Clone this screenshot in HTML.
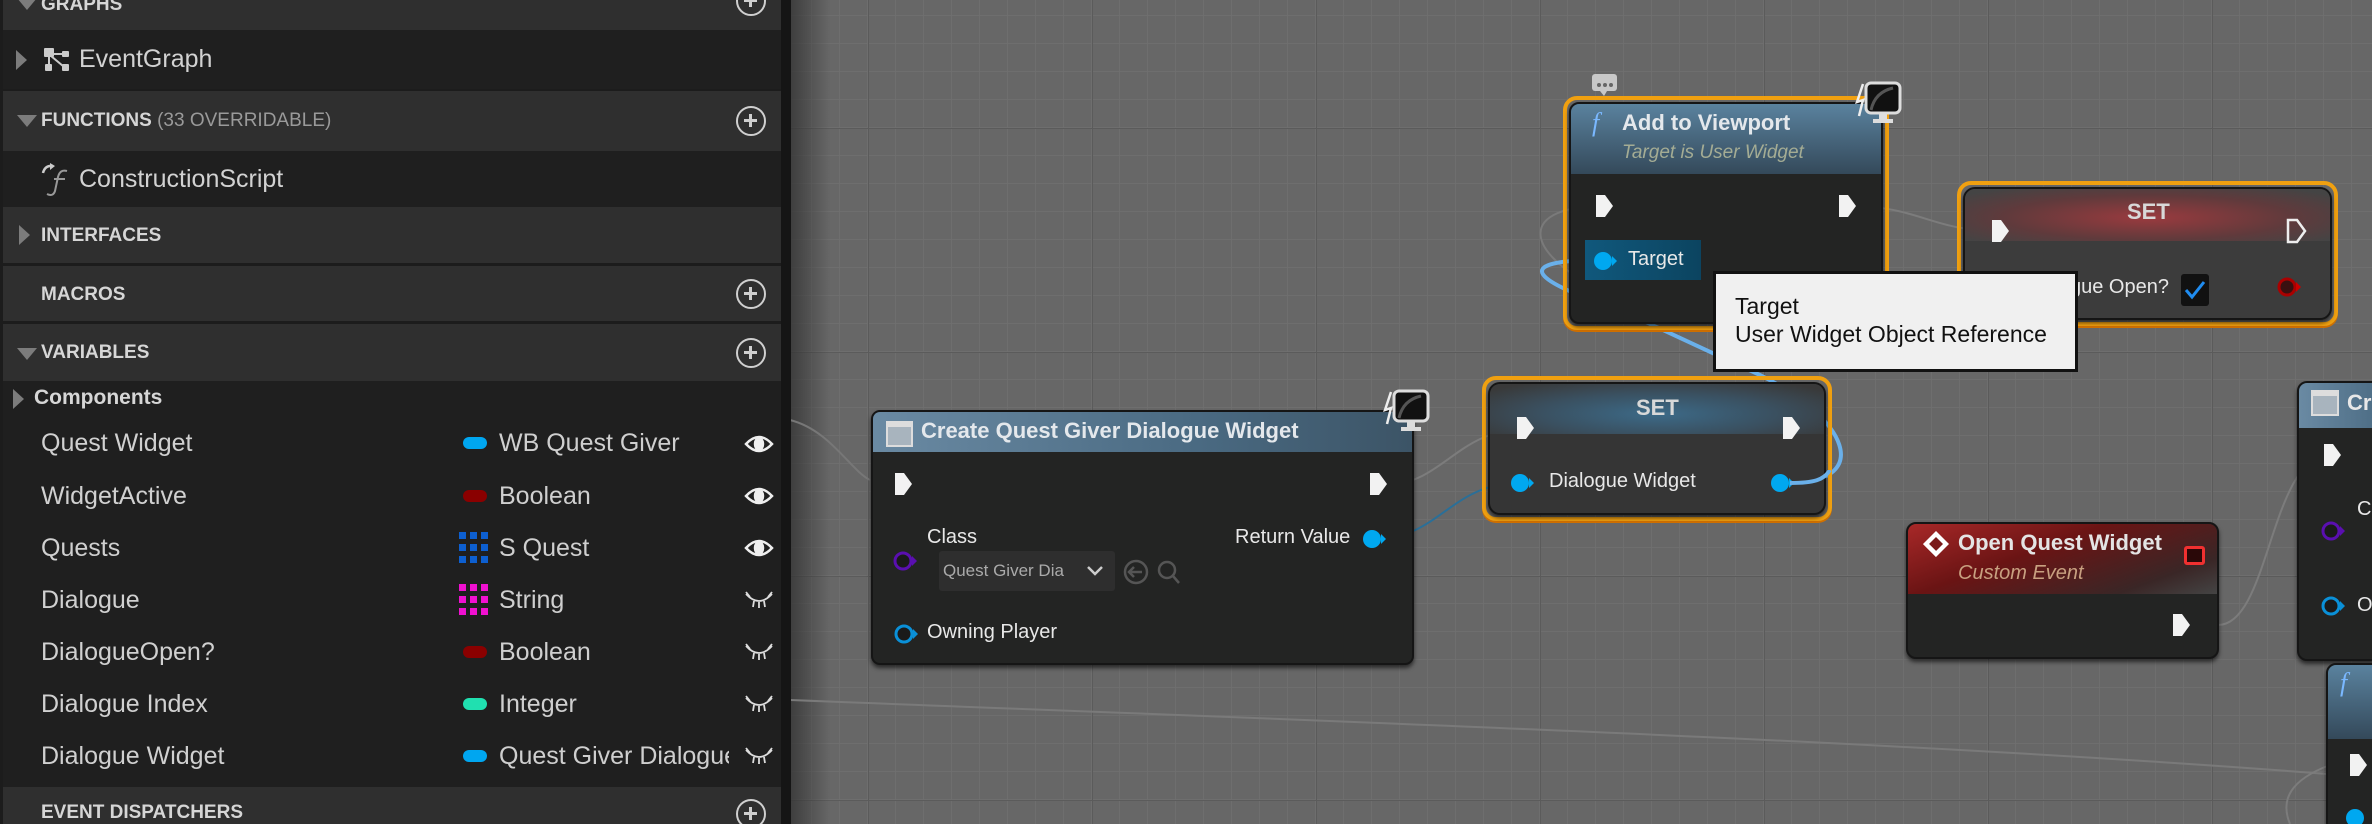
<!DOCTYPE html>
<html style="overflow:hidden;width:2372px;height:824px"><head><meta charset="utf-8"><style>
*{margin:0;padding:0;box-sizing:border-box}
body{width:2372px;height:824px;overflow:hidden;background:#676767;font-family:"Liberation Sans",sans-serif;position:relative}
.a{position:absolute}
#side{left:0;top:0;width:781px;height:824px;background:#1c1c1c}
.hd{position:absolute;left:3px;width:778px;background:#2f2f2f;color:#d6d6d6;font-weight:bold;font-size:19px}
.hd span{position:absolute;left:38px}
.row{position:absolute;left:3px;width:778px;background:#1f1f1f;color:#d2d2d2;font-size:25px}
.tri-d{position:absolute;left:14px;width:0;height:0;border-left:10px solid transparent;border-right:10px solid transparent;border-top:12px solid #7c7c7c}
.tri-r{position:absolute;left:13px;width:0;height:0;border-top:10px solid transparent;border-bottom:10px solid transparent;border-left:11px solid #7c7c7c}
.plus{position:absolute;left:733px;width:30px;height:30px;border:2.5px solid #cfcfcf;border-radius:50%}
.plus:before{content:"";position:absolute;left:6px;top:11px;width:13px;height:3px;background:#cfcfcf}
.plus:after{content:"";position:absolute;left:11px;top:6px;width:3px;height:13px;background:#cfcfcf}
.var{position:absolute;left:41px;color:#d0d0d0;font-size:25px;line-height:30px}
.ty{position:absolute;left:499px;color:#cfcfcf;font-size:25px;line-height:30px;white-space:nowrap;overflow:hidden;width:228px}
.pill{position:absolute;left:463px;width:24px;height:12px;border-radius:6px}
.node{position:absolute;background:#232423;border-radius:9px;box-shadow:0 3px 4px rgba(0,0,0,.6);overflow:hidden;border:2px solid #151515}
.sel{position:absolute;border:4px solid #f0a010;border-radius:14px;box-shadow:0 2px 0 #d07000}
.t{position:absolute;color:#e8e8e8;font-size:21px;white-space:nowrap}
</style></head><body>
<svg class="a" style="left:0;top:0" width="2372" height="824">
<defs>
<pattern id="mi" width="28" height="28" patternUnits="userSpaceOnUse" x="0" y="16"><path d="M28,0V28M0,28H28" stroke="#707070" stroke-width="1.5" fill="none"/></pattern>
<pattern id="ma" width="224" height="224" patternUnits="userSpaceOnUse" x="196" y="128"><path d="M0,0V224M0,0H224" stroke="#5b5b5b" stroke-width="2" fill="none"/></pattern>
<linearGradient id="lg" x1="0" x2="1"><stop offset="0" stop-color="#333" stop-opacity=".8"/><stop offset="1" stop-color="#333" stop-opacity="0"/></linearGradient>
</defs>
<rect width="2372" height="824" fill="#676767"/>
<rect width="2372" height="824" fill="url(#mi)"/>
<rect width="2372" height="824" fill="url(#ma)"/>
<rect x="790" width="40" height="824" fill="url(#lg)"/>
<path d="M790,700 C1300,720 1900,740 2340,775" stroke="#7a7a7a" stroke-width="2" fill="none"/>
<path d="M790,420 C830,430 850,470 870,480" stroke="#777" stroke-width="2" fill="none"/>
<path d="M1390,484 C1440,484 1460,430 1520,430" stroke="#7c7c7c" stroke-width="2" fill="none"/>
<path d="M2218,625 C2270,625 2270,455 2330,455" stroke="#7c7c7c" stroke-width="2" fill="none"/>
<path d="M1850,206 C1920,206 1930,231 1999,231" stroke="#7c7c7c" stroke-width="2" fill="none"/>
<path d="M1604,206 C1520,206 1520,250 1600,290" stroke="#7a7a7a" stroke-width="2" fill="none"/>
<path d="M1374,539 C1440,539 1450,483 1520,483" stroke="#2a6f98" stroke-width="2" fill="none"/>
<path d="M2330,765 C2290,780 2280,800 2290,824" stroke="#7c7c7c" stroke-width="2" fill="none"/>
<path d="M1794,483 C1870,480 1850,420 1760,375 L1620,310 C1530,280 1515,262 1590,260" stroke="#6ab0ea" stroke-width="4" fill="none"/>
</svg>

<div id="side" class="a"></div>
<div class="a" style="left:781px;top:0;width:10px;height:824px;background:#151515"></div>
<div class="hd" style="top:0;height:30px"><div class="tri-d" style="top:-2px"></div><span style="top:-6px">GRAPHS</span><div class="plus" style="top:-14px"></div></div>
<div class="row" style="top:30px;height:59px"><div class="tri-r" style="top:20px"></div>
<svg class="a" style="left:38px;top:16px" width="32" height="28"><rect x="3" y="2" width="10" height="9" fill="#ccc" rx="1"/><rect x="21" y="5" width="7" height="6" fill="#ccc" rx="1"/><rect x="4" y="18" width="7" height="7" fill="#ccc" rx="1"/><rect x="21" y="18" width="7" height="7" fill="#ccc" rx="1"/><path d="M8,10V19M10,10L22,20M12,8H21" stroke="#ccc" stroke-width="2"/></svg>
<span class="a" style="left:76px;top:15px">EventGraph</span></div>
<div class="hd" style="top:91px;height:60px"><div class="tri-d" style="top:24px"></div><span style="top:19px">FUNCTIONS <b style="font-weight:normal;color:#9a9a9a">(33 OVERRIDABLE)</b></span><div class="plus" style="top:15px"></div></div>
<div class="row" style="top:151px;height:56px">
<svg class="a" style="left:36px;top:12px" width="34" height="34"><path d="M4,10 Q6,2 14,3" stroke="#ccc" stroke-width="2.5" fill="none"/><path d="M11,0 L16,3 L11,7Z" fill="#ccc"/><path d="M28,8 Q21,6 19,14 L16,28 Q14,34 8,31" stroke="#999" stroke-width="2" fill="none"/><path d="M15,16H26" stroke="#999" stroke-width="2"/></svg>
<span class="a" style="left:76px;top:14px">ConstructionScript</span></div>
<div class="hd" style="top:207px;height:56px"><div class="tri-r" style="top:18px;left:16px"></div><span style="top:18px">INTERFACES</span></div>
<div class="hd" style="top:266px;height:55px"><span style="top:18px">MACROS</span><div class="plus" style="top:13px"></div></div>
<div class="hd" style="top:324px;height:57px"><div class="tri-d" style="top:24px"></div><span style="top:18px">VARIABLES</span><div class="plus" style="top:14px"></div></div>
<div class="row" style="top:381px;height:406px"></div>
<div class="tri-r" style="top:389px;left:13px"></div>
<div class="a" style="left:34px;top:386px;color:#d6d6d6;font-weight:bold;font-size:21px">Components</div>

<div class="var" style="top:428px">Quest Widget</div><div class="pill" style="top:437px;background:#00a6f0"></div><div class="ty" style="top:428px">WB Quest Giver</div>
<div class="var" style="top:481px">WidgetActive</div><div class="pill" style="top:490px;background:#8a0000"></div><div class="ty" style="top:481px">Boolean</div>
<div class="var" style="top:533px">Quests</div>
<svg class="a" style="left:459px;top:532px" width="32" height="32"><g fill="#0d5fd0"><rect x="0" y="0" width="7" height="7"/><rect x="11" y="0" width="7" height="7"/><rect x="22" y="0" width="7" height="7"/><rect x="0" y="12" width="7" height="7"/><rect x="11" y="12" width="7" height="7"/><rect x="22" y="12" width="7" height="7"/><rect x="0" y="24" width="7" height="7"/><rect x="11" y="24" width="7" height="7"/><rect x="22" y="24" width="7" height="7"/></g></svg>
<div class="ty" style="top:533px">S Quest</div>
<div class="var" style="top:585px">Dialogue</div>
<svg class="a" style="left:459px;top:584px" width="32" height="32"><g fill="#f010d0"><rect x="0" y="0" width="7" height="7"/><rect x="11" y="0" width="7" height="7"/><rect x="22" y="0" width="7" height="7"/><rect x="0" y="12" width="7" height="7"/><rect x="11" y="12" width="7" height="7"/><rect x="22" y="12" width="7" height="7"/><rect x="0" y="24" width="7" height="7"/><rect x="11" y="24" width="7" height="7"/><rect x="22" y="24" width="7" height="7"/></g></svg>
<div class="ty" style="top:585px">String</div>
<div class="var" style="top:637px">DialogueOpen?</div><div class="pill" style="top:646px;background:#8a0000"></div><div class="ty" style="top:637px">Boolean</div>
<div class="var" style="top:689px">Dialogue Index</div><div class="pill" style="top:698px;background:#20e0b0"></div><div class="ty" style="top:689px">Integer</div>
<div class="var" style="top:741px">Dialogue Widget</div><div class="pill" style="top:750px;background:#00a6f0"></div><div class="ty" style="top:741px;width:230px">Quest Giver Dialogue</div>
<svg class="a" style="left:744px;top:430px" width="32" height="340" fill="none" stroke="#eee" stroke-width="2.5">
<path d="M2,14 Q15,0 28,14 Q15,28 2,14Z"/><ellipse cx="15" cy="14" rx="4" ry="6" fill="#eee"/>
<g transform="translate(0,52)"><path d="M2,14 Q15,0 28,14 Q15,28 2,14Z"/><ellipse cx="15" cy="14" rx="4" ry="6" fill="#eee"/></g>
<g transform="translate(0,104)"><path d="M2,14 Q15,0 28,14 Q15,28 2,14Z"/><ellipse cx="15" cy="14" rx="4" ry="6" fill="#eee"/></g>
<g stroke-width="1.8" stroke="#ddd"><g transform="translate(0,156)"><path d="M2,8 Q15,22 28,8M2,6L6,11M28,6L24,11M10,15L9,21M20,15L21,21M15,16V22"/></g>
<g transform="translate(0,208)"><path d="M2,8 Q15,22 28,8M2,6L6,11M28,6L24,11M10,15L9,21M20,15L21,21M15,16V22"/></g>
<g transform="translate(0,260)"><path d="M2,8 Q15,22 28,8M2,6L6,11M28,6L24,11M10,15L9,21M20,15L21,21M15,16V22"/></g>
<g transform="translate(0,312)"><path d="M2,8 Q15,22 28,8M2,6L6,11M28,6L24,11M10,15L9,21M20,15L21,21M15,16V22"/></g></g>
</svg>
<div class="hd" style="top:787px;height:37px"><span style="top:15px">EVENT DISPATCHERS</span><div class="plus" style="top:12px"></div></div>

<!-- Create Quest Giver Dialogue Widget -->
<div class="node" style="left:871px;top:410px;width:543px;height:255px">
<div class="a" style="left:0;top:0;width:100%;height:40px;background:linear-gradient(90deg,#6a8aa3,#4a6a82 60%,#3c5466);"></div>
<div class="a" style="left:13px;top:9px;width:27px;height:26px;background:#a8b4be;border:2px solid #ddd;border-top-width:6px"></div>
</div>
<div class="t" style="left:921px;top:418px;font-weight:bold;font-size:22px;color:#e4e8ec">Create Quest Giver Dialogue Widget</div>
<svg class="a" style="left:1383px;top:388px" width="52" height="46"><path d="M8,4 L2,22 L8,20 L4,36" stroke="#eee" stroke-width="2.5" fill="none"/><rect x="11" y="3" width="34" height="30" rx="5" fill="#111" stroke="#ddd" stroke-width="3"/><path d="M16,30 Q20,12 38,8" stroke="#555" stroke-width="3" fill="none"/><rect x="24" y="34" width="8" height="5" fill="#ddd"/><rect x="18" y="39" width="20" height="4" fill="#ddd"/></svg>

<div class="t" style="left:927px;top:526px;font-size:20px">Class</div>
<div class="a" style="left:939px;top:551px;width:176px;height:40px;background:#2e2e2e;border-radius:3px"></div>
<div class="t" style="left:943px;top:561px;font-size:17px;color:#aaa">Quest Giver Dia</div>
<svg class="a" style="left:1086px;top:564px" width="18" height="14"><path d="M2,3 L9,10 L16,3" stroke="#ccc" stroke-width="2.5" fill="none"/></svg>
<svg class="a" style="left:1122px;top:558px" width="60" height="30" fill="none" stroke="#555" stroke-width="2.5"><circle cx="14" cy="14" r="11"/><path d="M20,14H8M12,9L7,14L12,19"/><circle cx="45" cy="12" r="8"/><path d="M51,18L57,25"/></svg>
<div class="t" style="left:1235px;top:526px;font-size:20px">Return Value</div>
<div class="t" style="left:927px;top:621px;font-size:20px">Owning Player</div>

<!-- SET (Dialogue Widget) -->
<div class="sel" style="left:1482px;top:376px;width:350px;height:145px"></div>
<div class="node" style="left:1488px;top:382px;width:338px;height:133px;border-radius:12px;background:#353535">
<div class="a" style="left:0;top:0;width:100%;height:50px;background:radial-gradient(ellipse at 50% 60%,#3c6a88 0%,#3a5060 50%,#393939 90%)"></div>
</div>
<div class="t" style="left:1636px;top:395px;font-weight:bold;font-size:22px;color:#d8d8d8">SET</div>
<svg class="a" style="left:1508px;top:470px" width="290" height="28"><circle cx="12" cy="13" r="9" fill="#00a8f0"/><path d="M21,8 L26,13 L21,18Z" fill="#00a8f0"/><circle cx="272" cy="13" r="9" fill="#00a8f0"/><path d="M281,8 L286,13 L281,18Z" fill="#00a8f0"/></svg>
<div class="t" style="left:1549px;top:470px;font-size:20px">Dialogue Widget</div>
<svg class="a" style="left:1784px;top:470px" width="50" height="30"><path d="M6,13 C30,13 40,10 46,0" stroke="#6ab0ea" stroke-width="4" fill="none"/></svg>

<!-- Add to Viewport -->
<div class="sel" style="left:1563px;top:96px;width:326px;height:234px"></div>
<div class="node" style="left:1569px;top:102px;width:314px;height:222px;border-radius:10px">
<div class="a" style="left:0;top:0;width:100%;height:70px;background:linear-gradient(180deg,#5a829e,#34495a);"></div>
</div>
<div class="t" style="left:1592px;top:108px;font-size:26px;font-style:italic;color:#7ab8ff;font-family:'Liberation Serif',serif">f</div>
<div class="t" style="left:1622px;top:110px;font-weight:bold;font-size:22px;color:#e4e8ec">Add to Viewport</div>
<div class="t" style="left:1622px;top:142px;font-size:19px;font-style:italic;color:#a4ac94">Target is User Widget</div>
<div class="a" style="left:1585px;top:240px;width:116px;height:40px;background:linear-gradient(90deg,#10587c,#0c4460)"></div>
<svg class="a" style="left:1590px;top:248px" width="30" height="26"><circle cx="13" cy="13" r="9" fill="#00a8f0"/><path d="M22,8 L27,13 L22,18Z" fill="#00a8f0"/></svg>
<div class="t" style="left:1628px;top:248px;font-size:20px">Target</div>
<svg class="a" style="left:1590px;top:72px" width="30" height="26"><rect x="2" y="2" width="25" height="17" rx="3" fill="#c8c8c8"/><path d="M10,19 L14,24 L17,19Z" fill="#c8c8c8"/><g fill="#666"><circle cx="9" cy="13" r="2"/><circle cx="15" cy="13" r="2"/><circle cx="21" cy="13" r="2"/></g></svg>
<svg class="a" style="left:1855px;top:80px" width="52" height="46"><path d="M8,4 L2,22 L8,20 L4,36" stroke="#eee" stroke-width="2.5" fill="none"/><rect x="11" y="3" width="34" height="30" rx="5" fill="#111" stroke="#ddd" stroke-width="3"/><path d="M16,30 Q20,12 38,8" stroke="#555" stroke-width="3" fill="none"/><rect x="24" y="34" width="8" height="5" fill="#ddd"/><rect x="18" y="39" width="20" height="4" fill="#ddd"/></svg>

<!-- SET red -->
<div class="sel" style="left:1957px;top:181px;width:381px;height:145px"></div>
<div class="node" style="left:1963px;top:187px;width:369px;height:133px;border-radius:12px;background:#3c3c3c">
<div class="a" style="left:0;top:0;width:100%;height:52px;background:radial-gradient(ellipse at 50% 55%,#9a3a3e 0%,#603a3c 55%,#444 90%)"></div>
</div>
<div class="t" style="left:2127px;top:199px;font-weight:bold;font-size:22px;color:#d8d8d8">SET</div>
<div class="t" style="left:2070px;top:276px;font-size:20px">gue Open?</div>
<div class="a" style="left:2181px;top:274px;width:28px;height:32px;background:#111;border-radius:3px"></div>
<svg class="a" style="left:2183px;top:279px" width="24" height="22"><path d="M3,11 L9,18 L21,3" stroke="#1f8cf0" stroke-width="3" fill="none"/></svg>
<svg class="a" style="left:2276px;top:276px" width="28" height="22"><circle cx="11" cy="11" r="8" fill="#3a1010" stroke="#a00" stroke-width="3"/><path d="M20,6 L25,11 L20,16Z" fill="#c00"/></svg>

<!-- Open Quest Widget -->
<div class="node" style="left:1906px;top:522px;width:313px;height:137px;border-radius:10px">
<div class="a" style="left:0;top:0;width:100%;height:70px;background:linear-gradient(160deg,#a82828 0%,#6a1414 40%,#3a2626 80%,#444 100%)"></div>
</div>
<svg class="a" style="left:1921px;top:529px" width="30" height="30"><path d="M15,2 L28,15 L15,28 L2,15Z" fill="#fff"/><path d="M15,8 L22,15 L15,22 L8,15Z" fill="#7a1a1a"/><path d="M2,15 L8,15 L15,22 L15,28Z" fill="#fff"/></svg>
<div class="t" style="left:1958px;top:530px;font-weight:bold;font-size:22px;color:#e4e4e4">Open Quest Widget</div>
<div class="t" style="left:1958px;top:562px;font-size:20px;font-style:italic;color:#c8a080">Custom Event</div>
<div class="a" style="left:2184px;top:546px;width:21px;height:19px;background:#2a0808;border:3px solid #f03030;border-radius:3px"></div>

<!-- Right partial node -->
<div class="node" style="left:2297px;top:381px;width:90px;height:280px;border-radius:10px">
<div class="a" style="left:0;top:0;width:100%;height:45px;background:linear-gradient(90deg,#6a8aa3,#4a6a82)"></div>
</div>
<div class="a" style="left:2311px;top:390px;width:28px;height:26px;background:#a8b4be;border:2px solid #ddd;border-top-width:6px"></div>
<div class="t" style="left:2347px;top:390px;font-weight:bold;font-size:22px">Cr</div>
<div class="t" style="left:2357px;top:498px;font-size:20px">Cl</div>
<div class="t" style="left:2357px;top:594px;font-size:20px">O</div>

<!-- bottom-right partial -->
<div class="node" style="left:2326px;top:663px;width:60px;height:170px;border-radius:10px">
<div class="a" style="left:0;top:0;width:100%;height:74px;background:linear-gradient(180deg,#5a829e,#34495a)"></div>
</div>
<div class="t" style="left:2340px;top:668px;font-size:26px;font-style:italic;color:#7ab8ff;font-family:'Liberation Serif',serif">f</div>

<!-- pins overlay -->
<svg class="a" style="left:0;top:0" width="2372" height="824">
<defs><path id="ex" d="M-8,-11 H1 L9,0 L1,11 H-8 Z"/></defs>
<g fill="#f2f2f2">
<use href="#ex" x="903" y="484"/><use href="#ex" x="1378" y="484"/>
<use href="#ex" x="1525" y="428"/><use href="#ex" x="1791" y="428"/>
<use href="#ex" x="1604" y="206"/><use href="#ex" x="1847" y="206"/>
<use href="#ex" x="2000" y="231"/>
<use href="#ex" x="2181" y="625"/>
<use href="#ex" x="2332" y="455"/>
<use href="#ex" x="2358" y="765"/>
</g>
<use href="#ex" x="2296" y="231" fill="none" stroke="#eee" stroke-width="2.5"/>
<circle cx="903" cy="561" r="8" fill="#1a1a1a" stroke="#5a0fb0" stroke-width="3"/><path d="M912,556 L917,561 L912,566Z" fill="#5a0fb0"/>
<circle cx="904" cy="634" r="8" fill="#1a1a1a" stroke="#0a90d8" stroke-width="3"/><path d="M913,629 L918,634 L913,639Z" fill="#0a90d8"/>
<circle cx="1372" cy="539" r="9" fill="#00a8f0"/><path d="M1381,534 L1386,539 L1381,544Z" fill="#00a8f0"/>
<circle cx="2331" cy="531" r="8" fill="#1a1a1a" stroke="#5a0fb0" stroke-width="3"/><path d="M2340,526 L2345,531 L2340,536Z" fill="#5a0fb0"/>
<circle cx="2331" cy="606" r="8" fill="#1a1a1a" stroke="#0a90d8" stroke-width="3"/><path d="M2340,601 L2345,606 L2340,611Z" fill="#0a90d8"/>
<circle cx="2355" cy="818" r="9" fill="#00a8f0"/>
</svg>

<!-- Tooltip -->
<div class="a" style="left:1713px;top:271px;width:365px;height:101px;background:#f0f0f0;border:3px solid #111"></div>
<div class="t" style="left:1735px;top:293px;font-size:23px;color:#111">Target</div>
<div class="t" style="left:1735px;top:321px;font-size:23px;color:#111">User Widget Object Reference</div>
</body></html>
